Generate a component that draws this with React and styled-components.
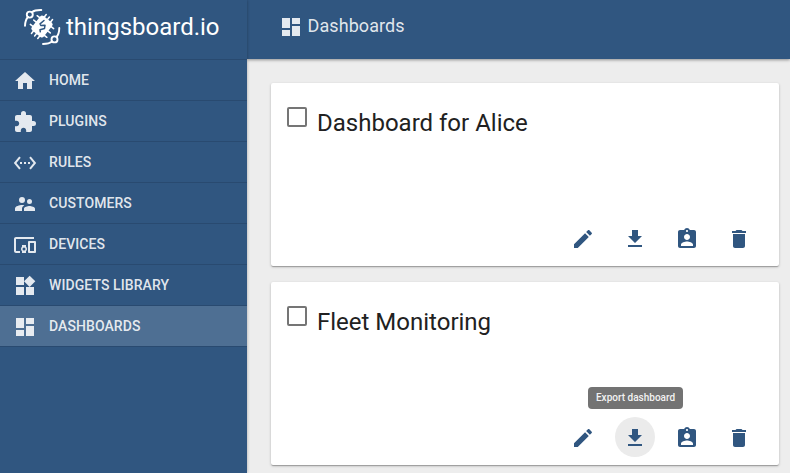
import React from "react";
import styled, { createGlobalStyle } from "styled-components";

const GlobalStyle = createGlobalStyle`
  * { box-sizing: border-box; }
  body {
    margin: 0;
    overflow: hidden;
    font-family: Roboto, "Liberation Sans", sans-serif;
  }
`;

const ICONS = {
  home: "M10 20v-6h4v6h5v-8h3L12 3 2 12h3v8z",
  extension:
    "M20.5 11H19V7c0-1.1-.9-2-2-2h-4V3.500a2.500 2.500 0 0 0-5 0V5H4c-1.100 0-1.990.9-1.990 2v3.800H3.500c1.490 0 2.700 1.210 2.700 2.700s-1.210 2.700-2.700 2.700H2V20c0 1.100.9 2 2 2h3.800v-1.500c0-1.490 1.210-2.700 2.700-2.700s2.700 1.210 2.700 2.700V22H17c1.100 0 2-.9 2-2v-4h1.500a2.500 2.500 0 0 0 0-5z",
  ethernet:
    "M7.770 6.760L6.230 5.480.82 12l5.410 6.520 1.540-1.280L3.420 12l4.350-5.240zM7 13h2v-2H7v2zm10-2h-2v2h2v-2zm-6 2h2v-2h-2v2zm6.770-7.520l-1.540 1.280L20.580 12l-4.350 5.240 1.540 1.280L23.180 12l-5.410-6.520z",
  people:
    "M16.500 12a2.500 2.500 0 1 0 0-5 2.500 2.500 0 0 0 0 5zM9 11a3 3 0 1 0 0-6 3 3 0 0 0 0 6zm7.500 3c-1.830 0-5.500.92-5.500 2.750V19h11v-2.250c0-1.830-3.670-2.750-5.500-2.750zM9 13c-2.330 0-7 1.170-7 3.500V19h7v-2.250c0-.85.33-2.340 2.370-3.470C10.500 13.100 9.660 13 9 13z",
  devices:
    "M3 6h18V4H3c-1.100 0-2 .9-2 2v12c0 1.100.9 2 2 2h4v-2H3V6zm10 6H9v1.780c-.61.55-1 1.330-1 2.220s.39 1.670 1 2.220V20h4v-1.780c.61-.55 1-1.340 1-2.220s-.39-1.670-1-2.220V12zm-2 5.500a1.500 1.500 0 1 1 0-3 1.500 1.500 0 0 1 0 3zM22 8h-6c-.5 0-1 .5-1 1v10c0 .5.5 1 1 1h6c.5 0 1-.5 1-1V9c0-.5-.5-1-1-1zm-1 10h-4v-8h4v8z",
  widgets: "M13 13v8h8v-8h-8zM3 21h8v-8H3v8zM3 3v8h8V3H3zm13.660-1.310L11 7.340 16.660 13l5.660-5.660-5.660-5.650z",
  dashboard: "M3 13h8V3H3v10zm0 8h8v-6H3v6zm10 0h8V11h-8v10zm0-18v6h8V3h-8z",
  edit:
    "M3 17.250V21h3.750L17.810 9.940l-3.750-3.750L3 17.250zM20.710 7.040c.39-.39.39-1.020 0-1.410l-2.340-2.340c-.39-.39-1.020-.39-1.410 0l-1.830 1.830 3.750 3.750 1.830-1.830z",
  download: "M19 9h-4V3H9v6H5l7 7 7-7zM5 18v2h14v-2H5z",
  assignment:
    "M19 3h-4.180C14.400 1.840 13.300 1 12 1c-1.300 0-2.400.84-2.820 2H5c-1.100 0-2 .9-2 2v14c0 1.100.9 2 2 2h14c1.100 0 2-.9 2-2V5c0-1.100-.9-2-2-2zm-7 0c.55 0 1 .45 1 1s-.45 1-1 1-1-.45-1-1 .45-1 1-1zm0 4c1.660 0 3 1.340 3 3s-1.340 3-3 3-3-1.340-3-3 1.340-3 3-3zm6 12H6v-1.400c0-2 4-3.100 6-3.100s6 1.100 6 3.100V19z",
  trash: "M6 19c0 1.100.9 2 2 2h8c1.100 0 2-.9 2-2V7H6v12zM19 4h-3.500l-1-1h-5l-1 1H5v2h14V4z",
};

const Svg = styled.svg`
  display: block;
  flex: none;
  width: 24px;
  height: 24px;
  fill: currentColor;
`;

const Icon = ({ name }) => (
  <Svg viewBox="0 0 24 24" aria-hidden="true">
    <path d={ICONS[name]} />
  </Svg>
);

const Page = styled.div`
  display: flex;
  width: 790px;
  height: 473px;
  overflow: hidden;
  background: #ededed;
`;

const Sidebar = styled.aside`
  z-index: 2;
  flex: none;
  width: 247px;
  color: rgba(255, 255, 255, 0.87);
  background: #305680;
  box-shadow: 0 0 3px rgba(0, 0, 0, 0.3);
`;

const Brand = styled.div`
  display: flex;
  align-items: flex-start;
  height: 60px;
  padding: 5px 0 0 20px;
  border-bottom: 1px solid #294a70;
  color: #fff;
`;

const LogoMark = styled.svg`
  flex: none;
  width: 44px;
  height: 44px;
`;

const BrandName = styled.span`
  padding: 6px 0 0 2px;
  font-size: 24px;
  line-height: 32px;
`;

const NavItem = styled.a`
  display: flex;
  align-items: center;
  gap: 12px;
  height: 41px;
  padding-left: 13px;
  border-bottom: 1px solid #294a70;
  background: ${({ $active }) => ($active ? "rgba(255, 255, 255, 0.15)" : "transparent")};
  font-size: 14px;
  font-weight: 500;
  letter-spacing: 0.08px;

  svg {
    margin-top: 2px;
  }
`;

const Main = styled.main`
  display: flex;
  flex: 1;
  flex-direction: column;
  min-width: 0;
`;

const Toolbar = styled.header`
  z-index: 1;
  display: flex;
  flex: none;
  align-items: center;
  gap: 4.5px;
  height: 59px;
  padding: 0 0 8px 32px;
  color: rgba(255, 255, 255, 0.87);
  background: #305680;
  box-shadow: 0 1px 3px rgba(0, 0, 0, 0.4);
  font-size: 18px;
  line-height: 22px;
  letter-spacing: 0.09px;

  svg {
    margin-top: 3px;
  }
`;

const CardList = styled.div`
  display: flex;
  flex-direction: column;
  gap: 16px;
  padding: 24px 11px 8px 24px;
`;

const Card = styled.section`
  display: flex;
  flex: none;
  flex-direction: column;
  justify-content: space-between;
  height: 183px;
  padding: 24px 20px 8px 16px;
  border-radius: 2px;
  background: #fff;
  box-shadow: 0 1px 3px 0 rgba(0, 0, 0, 0.2), 0 1px 1px 0 rgba(0, 0, 0, 0.14), 0 2px 1px -1px rgba(0, 0, 0, 0.12);
`;

const CardHeading = styled.div`
  display: flex;
  gap: 10px;
`;

const Checkbox = styled.span`
  flex: none;
  width: 20px;
  height: 20px;
  border: 2px solid #757575;
  border-radius: 2px;
`;

const CardTitle = styled.h2`
  margin: 0;
  color: #212121;
  font-size: 24px;
  font-weight: 400;
  line-height: 32px;
`;

const Actions = styled.div`
  display: flex;
  justify-content: flex-end;
  gap: 12px;
`;

const ActionButton = styled.button`
  position: relative;
  display: flex;
  align-items: center;
  justify-content: center;
  width: 40px;
  height: 40px;
  padding: 2px 0 0;
  border: 0;
  border-radius: 50%;
  color: #305680;
  background: ${({ $hovered }) => ($hovered ? "#ebebeb" : "transparent")};
`;

const Tooltip = styled.span`
  position: absolute;
  bottom: 48px;
  left: -27px;
  width: 95px;
  height: 22px;
  border-radius: 4px;
  color: #f2f2f2;
  background: #737373;
  font-family: Roboto, sans-serif;
  font-size: 10px;
  font-weight: 500;
  line-height: 22px;
  text-align: center;
  white-space: nowrap;
`;

const Logo = () => (
  <LogoMark viewBox="0 0 44 44" fill="none" stroke="#fff" strokeLinecap="round" aria-hidden="true">
    <g strokeWidth="1.9">
      <circle cx="9.800" cy="9.600" r="3" />
      <path d="M11.800 7.200Q15 4.800 21.300 5M8 12Q5.200 15 5 20.800" />
      <circle cx="34.500" cy="34.400" r="3" />
      <path d="M36.500 32Q39.200 29 39.300 23M32.300 36.500Q29 38.800 23 39" />
    </g>
    <g transform="translate(22 21.500) rotate(38)">
      <path
        strokeWidth="1.500"
        d="M-4-12V12M0-12V12M4-12V12M-10.500-5.500H10.500M-10.500 0H10.500M-10.500 5.500H10.500"
      />
      <rect x="-7.600" y="-9.200" width="15.200" height="18.400" rx="2.500" fill="#fff" stroke="none" />
    </g>
    <path stroke="#305680" strokeWidth="1.500" strokeLinejoin="round" d="M24 15.500L20 18.800L20.800 20.500L25 20.300L24.500 23.500L20 24.800L20.300 26.800" />
  </LogoMark>
);

const NAV = [
  ["home", "HOME"],
  ["extension", "PLUGINS"],
  ["ethernet", "RULES"],
  ["people", "CUSTOMERS"],
  ["devices", "DEVICES"],
  ["widgets", "WIDGETS LIBRARY"],
  ["dashboard", "DASHBOARDS"],
];

const DashboardCard = ({ title, exportHovered }) => (
  <Card>
    <CardHeading>
      <Checkbox role="checkbox" aria-checked="false" />
      <CardTitle>{title}</CardTitle>
    </CardHeading>
    <Actions>
      <ActionButton><Icon name="edit" /></ActionButton>
      <ActionButton $hovered={exportHovered}>
        <Icon name="download" />
        {exportHovered && <Tooltip>Export dashboard</Tooltip>}
      </ActionButton>
      <ActionButton><Icon name="assignment" /></ActionButton>
      <ActionButton><Icon name="trash" /></ActionButton>
    </Actions>
  </Card>
);

export default function App() {
  return (
    <>
      <GlobalStyle />
      <Page>
        <Sidebar>
          <Brand>
            <Logo />
            <BrandName>thingsboard.io</BrandName>
          </Brand>
          <nav>
            {NAV.map(([icon, label]) => (
              <NavItem key={label} $active={label === "DASHBOARDS"}>
                <Icon name={icon} />
                {label}
              </NavItem>
            ))}
          </nav>
        </Sidebar>
        <Main>
          <Toolbar>
            <Icon name="dashboard" />
            Dashboards
          </Toolbar>
          <CardList>
            <DashboardCard title="Dashboard for Alice" />
            <DashboardCard title="Fleet Monitoring" exportHovered />
          </CardList>
        </Main>
      </Page>
    </>
  );
}
